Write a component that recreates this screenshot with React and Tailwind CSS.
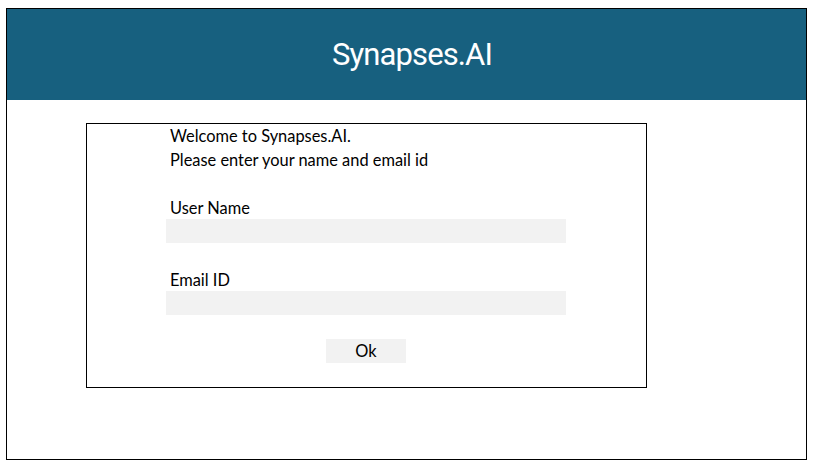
import React, { useState } from "react";

const App = () => {
  const [userName, setUserName] = useState("");
  const [email, setEmail] = useState("");

  return (
    <div className="w-[820px] h-[476px] bg-white pt-[8px] pl-[6px] font-['Lato',sans-serif] text-black">
      <div className="w-[801px] h-[452px] border border-black flex flex-col">
        <div className="h-[91px] bg-[#17607f] flex items-center justify-center">
          <p className="text-white text-[31px] tracking-[-0.9px] pl-[11px] pt-[2px] font-['Roboto',sans-serif]">Synapses.AI</p>
        </div>
        <div className="pl-[79px] pt-[23px]">
          <div className="w-[561px] h-[265px] border border-black pl-[79px]">
            <div className="w-[400px] flex flex-col">
              <p className="pl-1 text-[16.4px] leading-6">Welcome to Synapses.AI.</p>
              <p className="pl-1 text-[16.4px] leading-6">Please enter your name and email id</p>
              <label className="pl-1 mt-[25px] text-[16.4px] leading-[22px]">User Name</label>
              <input
                className="h-6 bg-[#f2f2f2] outline-none px-1 text-[14px]"
                value={userName}
                onChange={(e) => setUserName(e.target.value)}
              />
              <label className="pl-1 mt-[26px] text-[16.4px] leading-[22px]">Email ID</label>
              <input
                className="h-6 bg-[#f2f2f2] outline-none px-1 text-[14px]"
                value={email}
                onChange={(e) => setEmail(e.target.value)}
              />
              <button className="mt-6 mx-auto w-20 h-6 bg-[#f2f2f2] text-[16.4px] leading-6">Ok</button>
            </div>
          </div>
        </div>
      </div>
    </div>
  );
};

export default App;
